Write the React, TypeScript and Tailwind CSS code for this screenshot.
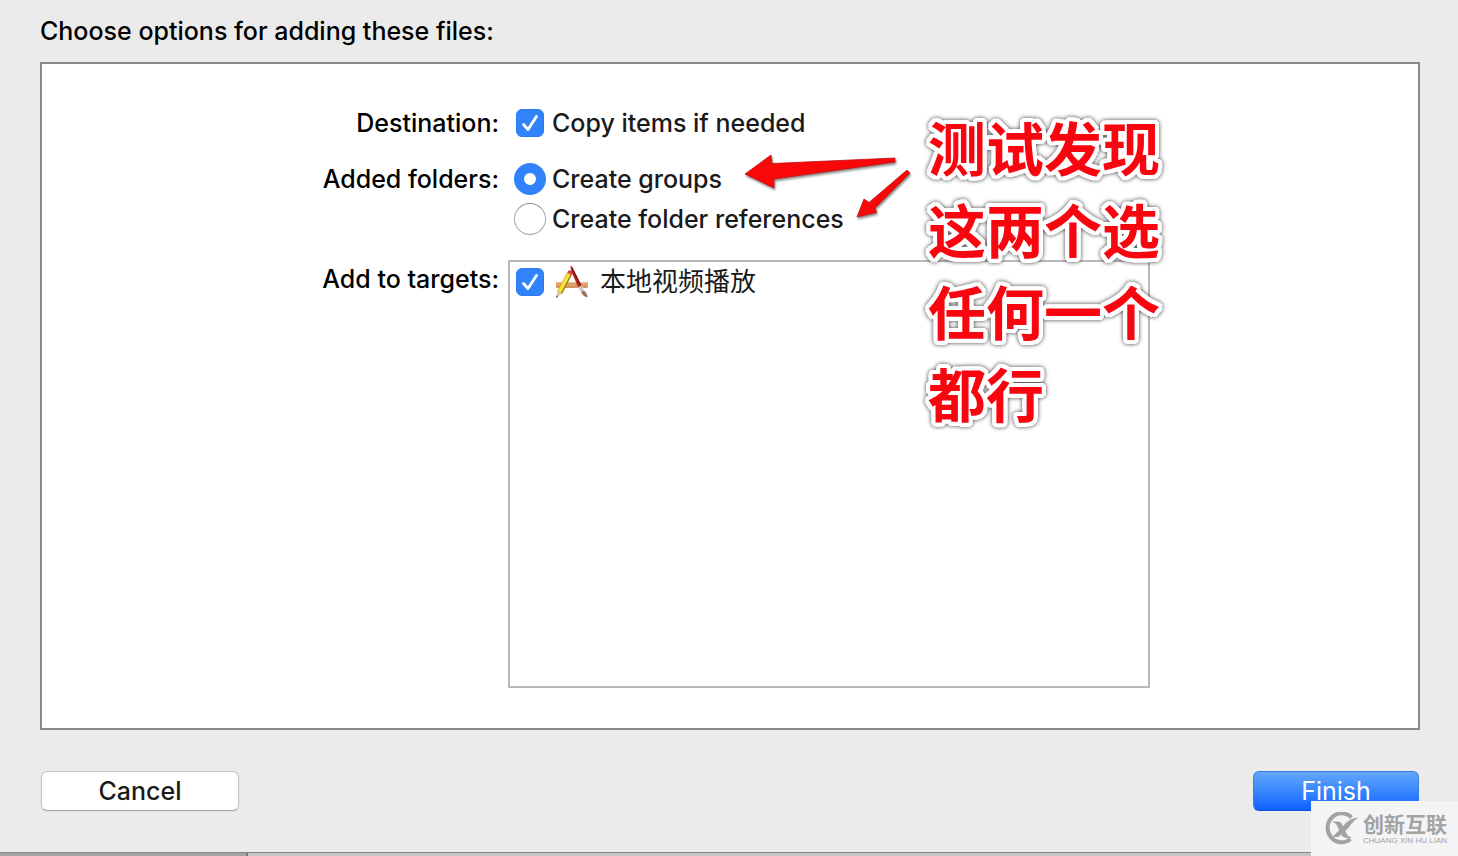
import { useState } from 'react'

function Checkbox({
  id,
  checked,
  onChange,
}: {
  id: string
  checked: boolean
  onChange: (value: boolean) => void
}) {
  return (
    <span className="grid shrink-0">
      <input
        id={id}
        type="checkbox"
        checked={checked}
        onChange={e => onChange(e.target.checked)}
        className="col-start-1 row-start-1 size-7 appearance-none rounded-md border border-gray-400 bg-white checked:border-[#2b7bf0] checked:bg-[#3083fb]"
      />
      {checked && (
        <svg viewBox="0 0 28 28" className="pointer-events-none col-start-1 row-start-1 size-7" aria-hidden="true">
          <path d="M7.5 15.5 L12 20.5 L20.5 7.5" fill="none" stroke="#fff" strokeWidth="2.8" strokeLinecap="round" strokeLinejoin="round" />
        </svg>
      )}
    </span>
  )
}

function Radio({
  id,
  checked,
  onChange,
}: {
  id: string
  checked: boolean
  onChange: () => void
}) {
  return (
    <input
      id={id}
      type="radio"
      name="folders"
      checked={checked}
      onChange={onChange}
      className="size-8 shrink-0 appearance-none rounded-full border border-[#a9a9a9] border-t-[#8c8c8c] bg-white checked:border-[10px] checked:border-[#3083fb]"
    />
  )
}

// Pencil and brush crossed over a ruler
function AppIcon() {
  return (
    <svg viewBox="0 0 36 34" className="h-[34px] w-9 shrink-0" aria-hidden="true">
      <rect x="2" y="17" width="32" height="6" fill="#dca06a" />
      <rect x="2" y="17" width="32" height="1.2" fill="#eebb85" />
      <path d="M4 21v2M7 21v2M10 21v2M13 21v2M16 21v2M19 21v2M22 21v2M25 21v2M28 21v2M31 21v2" stroke="#b87840" strokeWidth="0.8" />
      <path d="M13.300 7.500 L17.500 10 L8 28.500 L3.500 26 Z" fill="#f8e23a" stroke="#a8861a" strokeWidth="0.500" />
      <path d="M16.600 9.500 L17.500 10 L8 28.500 L7 28 Z" fill="#8f7410" />
      <path d="M13.300 7.500 Q14.700 4.300 17.300 5.800 Q19 7.200 17.500 10 Z" fill="#e0403c" />
      <path d="M3.500 26 L8 28.500 L2.500 32.500 Z" fill="#e8c39a" />
      <path d="M2.800 30.200 L4.200 31.200 L2.200 33 Z" fill="#222" />
      <path d="M16.300 1 L18.200 1.800 L27.500 20.500 L24.200 22.300 L17.500 7 Z" fill="#b3211c" />
      <path d="M17.500 2 L27 20.800" stroke="#671411" strokeWidth="1" />
      <path d="M24.200 22.300 L27.500 20.500 L30 25.500 L27 27 Z" fill="#c9c9c9" />
      <path d="M27 27 L30 25.500 Q33.500 28.500 33.500 32.500 Q29 31.500 27 27 Z" fill="#a4705c" />
    </svg>
  )
}

function Watermark() {
  return (
    <div className="absolute right-0 bottom-0 flex h-[55px] w-[147px] items-center gap-1 bg-[#f4f4f4] pl-3 text-[#a3a3a3]">
      <svg viewBox="0 0 36 34" className="h-[34px] w-9 shrink-0" aria-hidden="true">
        <path d="M28.500 5.500 A14 14.500 0 1 0 27.500 27" fill="none" stroke="currentColor" strokeWidth="4" />
        <path d="M35.500 5.500 Q27 6 21.500 12.500 L16 18.500 L9 25 H15.500 L25 16.500 Q30 9 35.500 5.500 Z" fill="currentColor" />
        <path d="M9 9.500 H16 Q19 10.500 20 14 L23 20.500 Q25 25 29 25.500 Q21 27.500 18 22.500 L14.500 14.500 Q13 11 9 9.500 Z" fill="currentColor" />
      </svg>
      <div className="flex flex-col whitespace-nowrap">
        <span className="font-['Inter','Noto_Sans_CJK_SC',sans-serif] text-[21px] leading-6 font-bold">创新互联</span>
        <span className="font-['Liberation_Sans',sans-serif] text-[8px] leading-2">CHUANG XIN HU LIAN</span>
      </div>
    </div>
  )
}

export default function App() {
  const [copyItems, setCopyItems] = useState(true)
  const [folders, setFolders] = useState('groups')
  const [target, setTarget] = useState(true)

  return (
    <div className="relative flex min-h-screen flex-col bg-[#ebebeb] font-['Inter','Noto_Sans_CJK_SC',sans-serif] text-[25px] leading-10 font-medium text-[#1a1a1a]">
      <main className="flex flex-1 flex-col pt-[11px] pr-[38px] pb-[41px] pl-10">
        <h1 className="mb-[11px] text-black">Choose options for adding these files:</h1>

        <div className="relative flex flex-1 flex-col border-2 border-[#8a8a8a] bg-white pt-[39px] pr-[268px] pb-10">
          <div className="grid flex-1 grid-cols-[1fr_642px] grid-rows-[auto_auto_1fr] gap-x-[9px]">
            <span className="text-right text-black">Destination:</span>
            <div className="flex items-center gap-2 pl-2">
              <Checkbox id="copy" checked={copyItems} onChange={setCopyItems} />
              <label htmlFor="copy">Copy items if needed</label>
            </div>

            <span className="mt-4 text-right text-black">Added folders:</span>
            <div className="mt-4">
              <div className="flex items-center gap-1.5 pl-1.5">
                <Radio id="groups" checked={folders === 'groups'} onChange={() => setFolders('groups')} />
                <label htmlFor="groups">Create groups</label>
              </div>
              <div className="flex items-center gap-1.5 pl-1.5">
                <Radio id="references" checked={folders === 'references'} onChange={() => setFolders('references')} />
                <label htmlFor="references">Create folder references</label>
              </div>
            </div>

            <span className="mt-5 text-right text-black">Add to targets:</span>
            <div className="mt-[21px] border-2 border-[#b9b9b9]">
              <div className="flex items-center pl-1.5">
                <Checkbox id="target" checked={target} onChange={setTarget} />
                <label htmlFor="target" className="ml-2.5 flex items-center gap-2.5 text-[26px] font-normal">
                  <AppIcon />
                  本地视频播放
                </label>
              </div>
            </div>
          </div>

          {/* Arrows */}
          <svg viewBox="0 0 180 76" className="pointer-events-none absolute top-[84px] left-[698px] h-[76px] w-[180px]" aria-hidden="true">
            <g fill="#f80808" stroke="#c01010" strokeWidth="0.8" className="drop-shadow-[1px_2px_1px_rgba(0,0,0,0.45)]">
              <path d="M5 26 L31 7 L32 15.500 L155 10 L155 14 L34 31 L34 40 Z" />
              <path d="M167 22 L170 25 L135 60 L136.500 64.500 L117 69 L124 51 L129 54.500 Z" />
            </g>
          </svg>

          {/* Note */}
          <p className="absolute top-[41px] left-[886px] font-['Noto_Sans_CJK_SC',sans-serif] text-[58px] leading-[82px] font-bold text-[#f90510] [text-shadow:4px_0_white,-4px_0_white,0_4px_white,0_-4px_white,3px_3px_white,-3px_3px_white,3px_-3px_white,-3px_-3px_white,4px_2px_white,-4px_2px_white,4px_-2px_white,-4px_-2px_white,2px_4px_white,-2px_4px_white,2px_-4px_white,-2px_-4px_white] drop-shadow-[0_0_2px_rgba(0,0,0,0.75)]">
            测试发现<br />
            这两个选<br />
            任何一个<br />
            都行
          </p>
        </div>

        <div className="mt-[41px] flex justify-between px-px">
          <button
            type="button"
            className="h-10 w-[198px] rounded-md border border-[#c4c4c4] border-b-[#a2a2a2] bg-white leading-9 shadow-xs"
          >
            Cancel
          </button>
          <button
            type="button"
            className="h-10 w-[166px] rounded-md border border-[#3b7fe0] border-b-[#0b51dd] bg-linear-to-b from-[#62a7fb] to-[#0a60ff] leading-9 font-normal text-white"
          >
            Finish
          </button>
        </div>
      </main>

      <div className="flex h-1 border-t border-[#858585]">
        <div className="w-[248px] border-r-2 border-[#777] bg-[#a7a3a4]" />
        <div className="flex-1 bg-[#c4c4c4]" />
      </div>

      <Watermark />
    </div>
  )
}
